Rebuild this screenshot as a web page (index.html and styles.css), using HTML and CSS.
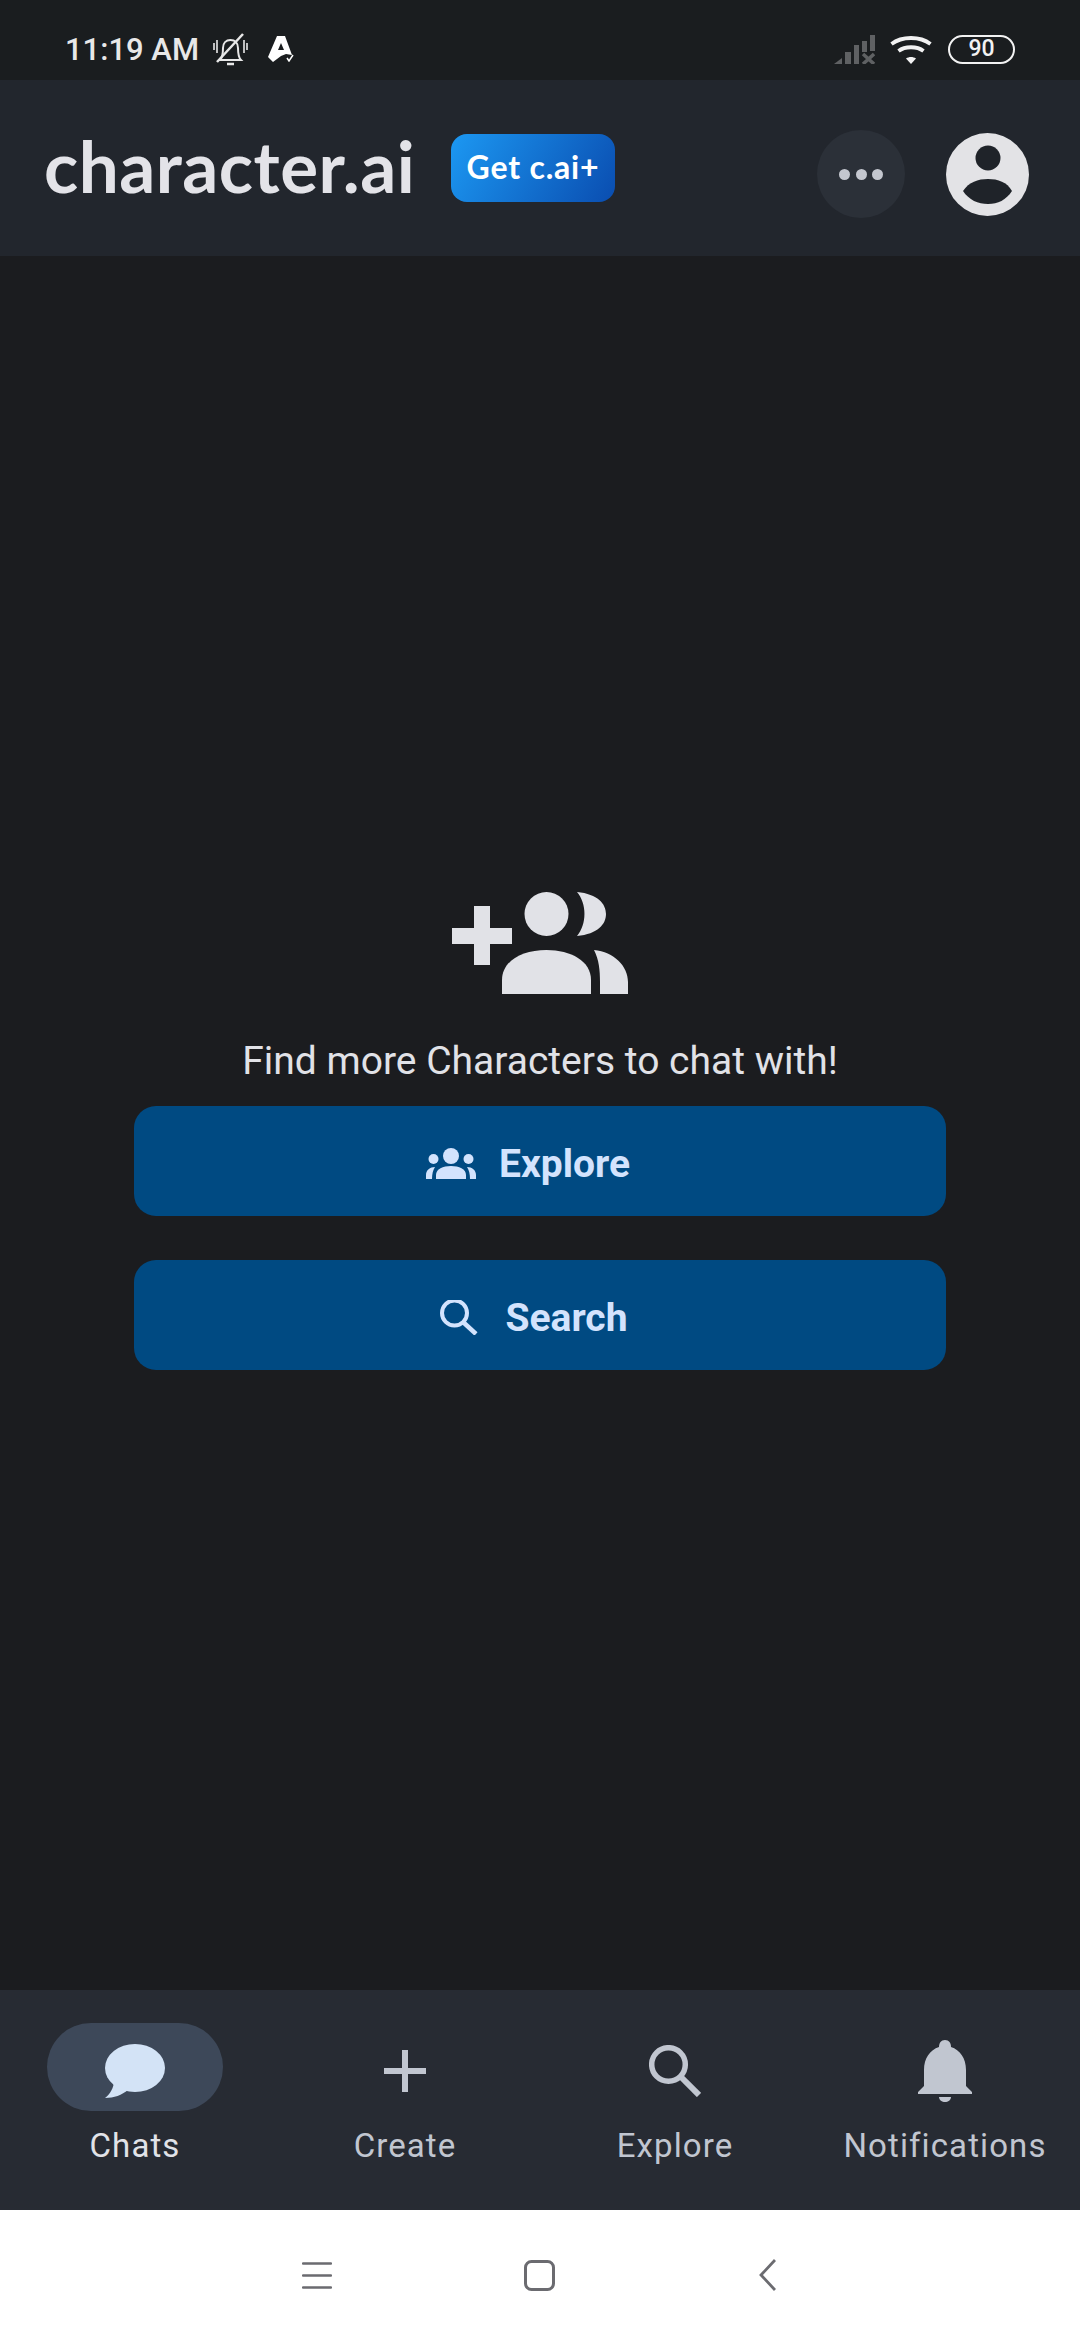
FILE: index.html
```html
<!DOCTYPE html>
<html lang="en">
<head>
    <meta charset="UTF-8">
    <meta name="viewport" content="width=device-width, initial-scale=1.0">
    <title>character.ai</title>
    <link rel="stylesheet" href="styles.css">
</head>
<body>
    <div class="status-bar">
        <div class="status-left">
            <span class="status-time">11:19 AM</span>
            <svg class="icon-muted" viewBox="0 0 35 33" fill="none" stroke="#e8e8e8" stroke-width="2">
                <path d="M7 27C10 24 10 20 10 15C10 10 13 7 17.500 7C22 7 25 10 25 15C25 20 25 24 28 27Z"/>
                <path d="M1 10V17M4 7V20M31 7V20M34 10V17" stroke-width="1.600"/>
                <path d="M4 29L30 1" stroke-width="2.500"/>
                <path d="M14 31H21" stroke-width="2.500"/>
            </svg>
            <svg class="icon-store" viewBox="0 0 26 26">
                <path fill="#fff" fill-rule="evenodd" d="M9 0H17L24 19L18 18L13 20L5 26L0 21ZM13 7L10 14H16Z"/>
                <path fill="none" stroke="#fff" stroke-width="1.500" d="M19 22L21 25L25 19"/>
            </svg>
        </div>
        <div class="status-right">
            <svg class="icon-signal" viewBox="0 0 41 29" fill="#5f6163">
                <path d="M0 29L8 23V29Z"/>
                <rect x="11" y="17" width="6" height="12"/>
                <rect x="20" y="10" width="5" height="19"/>
                <rect x="28" y="6" width="5" height="11"/>
                <rect x="36" y="0" width="5" height="16"/>
                <path d="M29 19L40 29M40 19L29 29" stroke="#5f6163" stroke-width="3.500" fill="none"/>
            </svg>
            <svg class="icon-wifi" viewBox="0 0 42 29" fill="none" stroke="#f2f2f2" stroke-width="3.800">
                <path d="M1.500 9C12 1 30 1 40.500 9"/>
                <path d="M8.500 16C15 11 27 11 33.500 16"/>
                <path d="M21 29L16 23.500C19 21.500 23 21.500 26 23.500Z" fill="#f2f2f2" stroke="none"/>
            </svg>
            <div class="battery">90</div>
        </div>
    </div>

    <header class="top-bar">
        <div class="logo">character.ai</div>
        <div class="get-plus">Get c.ai+</div>
        <div class="top-actions">
            <div class="more-btn">
                <span class="dot"></span><span class="dot"></span><span class="dot"></span>
            </div>
            <svg class="avatar" viewBox="0 0 83 83">
                <circle cx="41.500" cy="41.500" r="41.500" fill="#e3e3e6"/>
                <circle cx="42" cy="25" r="12.500" fill="#1f2329"/>
                <path d="M17 58C23 49 32 46 42 46C52 46 61 49 66 58C60 67 52 71 42 71C32 71 23 67 17 58Z" fill="#1f2329"/>
            </svg>
        </div>
    </header>

    <main class="empty-state">
        <svg class="empty-icon" viewBox="0 0 176 102" fill="#e1e2e7">
            <path d="M22 14H38V36H60V52H38V73H22V52H0V36H22Z"/>
            <ellipse cx="94.500" cy="22" rx="22" ry="22"/>
            <path d="M125 0C146 2 154 12 154 22C154 32 146 42 125 44C135 32 135 12 125 0Z"/>
            <path d="M50 102V88C50 69 70 58 94.500 58C119 58 139 69 139 88V102Z"/>
            <path d="M142 58C162 60 176 74 176 90V102H148V90C148 78 147 68 142 58Z"/>
        </svg>
        <p class="empty-text">Find more Characters to chat with!</p>
        <div class="action-btn">
            <svg class="icon-groups" viewBox="0 0 50 31" fill="#d3e3fd">
                <circle cx="25" cy="8" r="8"/>
                <circle cx="7.500" cy="11" r="5"/>
                <circle cx="42.500" cy="11" r="5"/>
                <path d="M10 31V27C10 21 17 18 25 18C33 18 40 21 40 27V31Z"/>
                <path d="M0 31V27C0 22 4 19 9 19C7 22 6 26 6 31Z"/>
                <path d="M50 31V27C50 22 46 19 41 19C43 22 44 26 44 31Z"/>
            </svg>
            <span>Explore</span>
        </div>
        <div class="action-btn search-btn">
            <svg class="icon-search-small" viewBox="0 0 38 35" fill="none" stroke="#d3e3fd" stroke-width="4">
                <circle cx="14.500" cy="13" r="12.500"/>
                <path d="M23 22L36 34" stroke-width="4.500"/>
            </svg>
            <span>Search</span>
        </div>
    </main>

    <nav class="bottom-nav">
        <div class="nav-item">
            <div class="nav-icon active">
                <svg class="icon-bubble" viewBox="0 0 60 54" fill="#d3e3f6">
                    <ellipse cx="30" cy="24" rx="30" ry="24"/>
                    <path d="M9 36C9 44 5 50 0 54C9 54 17 51 23 46Z"/>
                </svg>
            </div>
            <span class="nav-label current">Chats</span>
        </div>
        <div class="nav-item">
            <div class="nav-icon">
                <svg class="icon-plus" viewBox="0 0 42 42" fill="#c1c6d0">
                    <path d="M18 0H24V18H42V24H24V42H18V24H0V18H18Z"/>
                </svg>
            </div>
            <span class="nav-label">Create</span>
        </div>
        <div class="nav-item">
            <div class="nav-icon">
                <svg class="icon-search" viewBox="0 0 52 52" fill="none" stroke="#c1c6d0" stroke-width="5.500">
                    <circle cx="19.500" cy="19.500" r="16.800"/>
                    <path d="M32 32L50 50" stroke-width="6"/>
                </svg>
            </div>
            <span class="nav-label">Explore</span>
        </div>
        <div class="nav-item">
            <div class="nav-icon">
                <svg class="icon-bell" viewBox="0 0 54 62" fill="#c1c6d0">
                    <path d="M27 0C31 0 33 3 33 7C42 10 48 18 48 30V46L54 52V54H0V52L6 46V30C6 18 12 10 21 7C21 3 23 0 27 0Z"/>
                    <path d="M21 57H33C33 60 30 62 27 62C24 62 21 60 21 57Z"/>
                </svg>
            </div>
            <span class="nav-label">Notifications</span>
        </div>
    </nav>

    <div class="system-bar">
        <svg class="sys-menu" viewBox="0 0 30 27" stroke="#6b6b70" stroke-width="2.500" stroke-linecap="round">
            <path d="M1 1.500H29M1 13.500H29M1 25.500H29"/>
        </svg>
        <svg class="sys-home" viewBox="0 0 31 31" fill="none" stroke="#6b6b70" stroke-width="3">
            <rect x="1.500" y="1.500" width="28" height="28" rx="6"/>
        </svg>
        <svg class="sys-back" viewBox="0 0 17 32" fill="none" stroke="#6b6b70" stroke-width="2.800">
            <path d="M16 1L2 16L16 31"/>
        </svg>
    </div>
</body>
</html>
```

FILE: styles.css
```css
* {
    box-sizing: border-box;
}

html, body {
    margin: 0;
    padding: 0;
}

body {
    width: 1080px;
    height: 2340px;
    overflow: hidden;
    display: flex;
    flex-direction: column;
    background-color: #1b1c1f;
    font-family: Roboto, Arial, sans-serif;
}

svg {
    display: block;
    flex-shrink: 0;
}

/* status bar */
.status-bar {
    height: 80px;
    padding: 0 65px;
    display: flex;
    justify-content: space-between;
    align-items: center;
    background-color: #1a1d1f;
}

.status-left, .status-right {
    display: flex;
    align-items: center;
    padding-top: 18px;
    height: 80px;
}

.status-time {
    width: 131px;
    color: #e8e8e8;
    font-size: 31px;
    font-weight: 500;
    white-space: nowrap;
}

.icon-muted {
    width: 35px;
    height: 33px;
    margin-left: 17px;
}

.icon-store {
    width: 26px;
    height: 26px;
    margin-left: 20px;
}

.icon-signal {
    width: 41px;
    height: 29px;
}

.icon-wifi {
    width: 42px;
    height: 29px;
    margin-left: 15px;
}

.battery {
    width: 67px;
    height: 29px;
    margin-left: 16px;
    border: 2.500px solid #f2f2f2;
    border-radius: 15px;
    color: #f2f2f2;
    font-size: 23px;
    font-weight: 500;
    line-height: 24px;
    text-align: center;
}

/* top bar */
.top-bar {
    height: 176px;
    padding: 0 51px 0 44px;
    display: flex;
    align-items: center;
    background-color: #22262d;
}

.logo {
    width: 367px;
    margin-bottom: 5px;
    color: #e3e3e8;
    font-family: Lato, Arial, sans-serif;
    font-size: 71px;
    font-weight: 700;
    letter-spacing: 0.5px;
    white-space: nowrap;
}

.get-plus {
    width: 164px;
    height: 68px;
    margin-left: 40px;
    border-radius: 16px;
    background: linear-gradient(120deg, #1c98f2, #0a4db0);
    color: #fff;
    font-family: Lato, Arial, sans-serif;
    font-size: 32px;
    font-weight: 700;
    letter-spacing: 0.8px;
    line-height: 66px;
    text-align: center;
    white-space: nowrap;
}

.top-actions {
    margin-left: auto;
    margin-top: 12px;
    display: flex;
    align-items: center;
    gap: 41px;
}

.more-btn {
    width: 88px;
    height: 88px;
    border-radius: 50%;
    background-color: #2b3038;
    display: flex;
    justify-content: center;
    align-items: center;
    gap: 5.500px;
}

.dot {
    width: 11px;
    height: 11px;
    border-radius: 50%;
    background-color: #c4c7cf;
}

.avatar {
    width: 83px;
    height: 83px;
}

/* empty state */
.empty-state {
    flex: 1;
    padding-top: 636px;
    display: flex;
    flex-direction: column;
    align-items: center;
}

.empty-icon {
    width: 176px;
    height: 102px;
}

.empty-text {
    margin: 45px 0 0;
    color: #e1e2e7;
    font-size: 39px;
    line-height: 44px;
    white-space: nowrap;
}

.action-btn {
    width: 812px;
    height: 110px;
    margin-top: 44px;
    padding: 5px 24px 0 0;
    border-radius: 22px;
    background-color: #004a82;
    color: #d3e3fd;
    font-size: 39px;
    font-weight: 700;
    display: flex;
    justify-content: center;
    align-items: center;
    gap: 23px;
}

.empty-text + .action-btn {
    margin-top: 23px;
}

.search-btn {
    padding-right: 12px;
    gap: 27px;
}

.icon-groups {
    width: 50px;
    height: 31px;
}

.icon-search-small {
    width: 38px;
    height: 35px;
}

/* bottom navigation */
.bottom-nav {
    height: 220px;
    padding-top: 33px;
    display: grid;
    grid-template-columns: repeat(4, 1fr);
    background-color: #272b33;
}

.nav-item {
    display: flex;
    flex-direction: column;
    align-items: center;
}

.nav-icon {
    width: 176px;
    height: 88px;
    padding-top: 8px;
    border-radius: 44px;
    display: flex;
    justify-content: center;
    align-items: center;
}

.nav-icon.active {
    background-color: #3d4859;
}

.icon-bubble {
    width: 60px;
    height: 54px;
}

.icon-plus {
    width: 42px;
    height: 42px;
}

.icon-search {
    width: 52px;
    height: 52px;
}

.icon-bell {
    width: 54px;
    height: 62px;
}

.nav-label {
    margin-top: 15px;
    color: #c1c6d0;
    font-size: 33px;
    line-height: 40px;
    letter-spacing: 1.100px;
    white-space: nowrap;
}

.nav-label.current {
    color: #e1e3e8;
}

/* android buttons */
.system-bar {
    height: 130px;
    padding-left: 302px;
    background-color: #fff;
    display: flex;
    align-items: center;
}

.sys-menu {
    width: 30px;
    height: 27px;
}

.sys-home {
    width: 31px;
    height: 31px;
    margin-left: 192px;
}

.sys-back {
    width: 17px;
    height: 32px;
    margin-left: 204px;
}
```
